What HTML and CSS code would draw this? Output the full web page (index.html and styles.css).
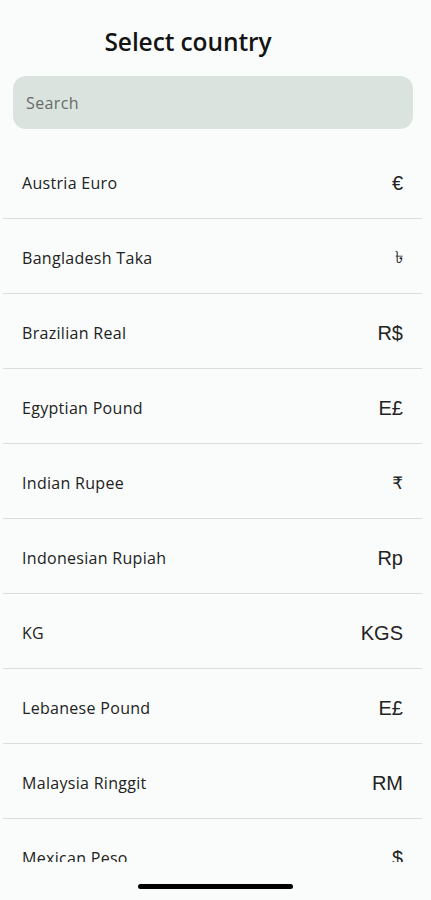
FILE: index.html
```html
<!DOCTYPE html>
<html lang="en">
<head>
  <meta charset="UTF-8" />
  <meta name="viewport" content="width=device-width, initial-scale=1.0" />
  <title>Select country</title>
  <link rel="stylesheet" href="styles.css">
</head>
<body>
  <div class="screen">
    <header class="top">
      <h1 class="title">Select country</h1>
    </header>

    <div class="search">
      <input type="text" placeholder="Search" />
    </div>

    <!-- currency list -->
    <ul class="list">
      <li class="row"><span class="name">Austria Euro</span><span class="sym">€</span></li>
      <li class="row"><span class="name">Bangladesh Taka</span><span class="sym small">৳</span></li>
      <li class="row"><span class="name">Brazilian Real</span><span class="sym">R$</span></li>
      <li class="row"><span class="name">Egyptian Pound</span><span class="sym">E£</span></li>
      <li class="row"><span class="name">Indian Rupee</span><span class="sym small">₹</span></li>
      <li class="row"><span class="name">Indonesian Rupiah</span><span class="sym">Rp</span></li>
      <li class="row"><span class="name">KG</span><span class="sym">KGS</span></li>
      <li class="row"><span class="name">Lebanese Pound</span><span class="sym">E£</span></li>
      <li class="row"><span class="name">Malaysia Ringgit</span><span class="sym">RM</span></li>
      <li class="row"><span class="name">Mexican Peso</span><span class="sym">$</span></li>
      <li class="row"><span class="name">Nigerian Naira</span><span class="sym">₦</span></li>
    </ul>

    <div class="home-bar"></div>
  </div>
</body>
</html>
```

FILE: styles.css
```css
* {
  box-sizing: border-box;
}
body {
  margin: 0;
  background: #fafcfb;
  font-family: 'Open Sans', 'Noto Sans', sans-serif;
  color: #1e1e1e;
}

.screen {
  width: 431px;
  height: 900px;
  display: flex;
  flex-direction: column;
  overflow: hidden;
}

.top {
  display: flex;
  justify-content: center;
  padding: 26px 55px 0 0;
  height: 76px;
}

.title {
  margin: 0;
  font-size: 24.5px;
  font-weight: 600;
  line-height: 32px;
  letter-spacing: -0.1px;
  color: #141414;
}

.search {
  margin: 0 18px 0 13px;
}

.search input {
  width: 100%;
  height: 53px;
  border: none;
  border-radius: 13px;
  background: #dbe3de;
  padding: 0 13px;
  font-family: inherit;
  font-size: 16px;
  letter-spacing: 0.4px;
  outline: none;
}

.search input::placeholder {
  color: #666b68;
}

.list {
  list-style: none;
  margin: 15px 9px 0 3px;
  padding: 0;
  height: 718px;
  overflow: hidden;
}

.row {
  display: flex;
  align-items: center;
  justify-content: space-between;
  height: 75px;
  padding: 4px 19px 0;
  border-bottom: 1px solid #dcdcdc;
}

.name {
  font-size: 16px;
  letter-spacing: 0.3px;
  color: #222;
}

.sym {
  font-size: 20px;
  color: #222;
  font-family: 'Liberation Sans', 'DejaVu Sans', sans-serif;
}

.sym.small {
  font-size: 17px;
}

.home-bar {
  width: 155px;
  height: 5px;
  border-radius: 3px;
  background: #000;
  margin: 22px auto 0;
}
```
